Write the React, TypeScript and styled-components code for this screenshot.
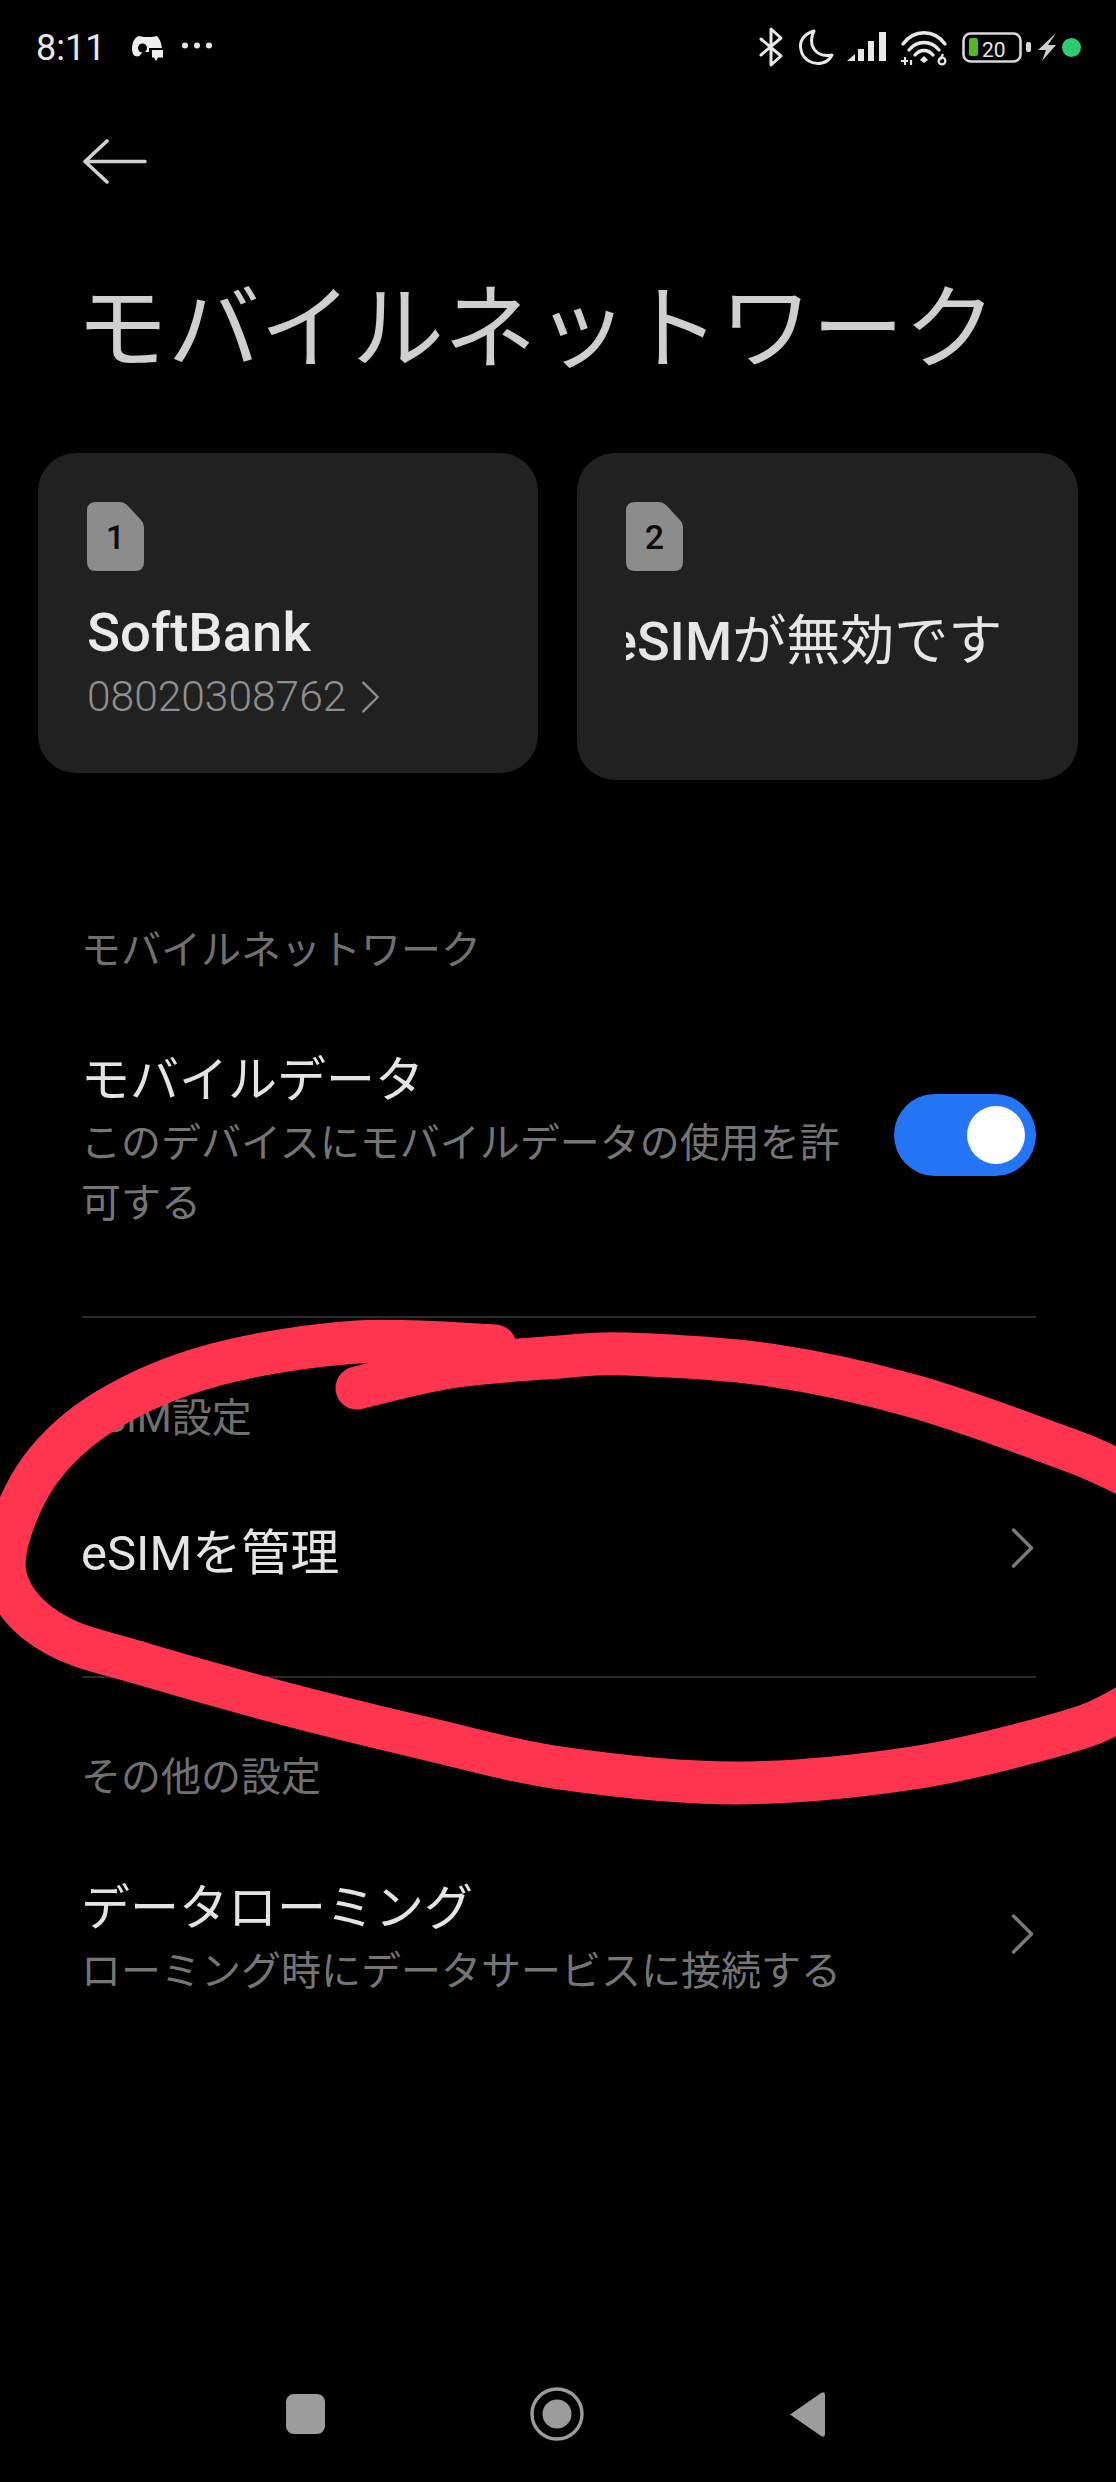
import React from 'react';
import styled, { createGlobalStyle } from 'styled-components';

const Global = createGlobalStyle`
  html, body { margin: 0; padding: 0; background: #000; }
  body { font-family: Roboto, "Noto Sans CJK JP", sans-serif; }
  #root { width: 1116px; height: 2482px; overflow: hidden; }
`;

const Page = styled.div`
  position: relative;
  width: 1116px;
  height: 2482px;
  background: #000;
  overflow: hidden;
  display: flex;
  flex-direction: column;
`;

const StatusBar = styled.div`
  height: 96px;
  padding: 0 32px 0 36px;
  box-sizing: border-box;
  display: flex;
  align-items: center;
  justify-content: space-between;
  color: #e8e8e8;
`;

const StatusLeft = styled.div`
  display: flex;
  align-items: center;
  gap: 25px;
`;

const Time = styled.span`
  font-family: Roboto, sans-serif;
  font-size: 36px;
  line-height: 40px;
`;

const StatusRight = styled.div`
  display: flex;
  align-items: center;
`;

const BackRow = styled.div`
  height: 130px;
  padding-left: 83px;
  display: flex;
  align-items: center;
`;

const Title = styled.h1`
  margin: 0;
  padding: 0 0 12px 76px;
  height: 202px;
  box-sizing: border-box;
  display: flex;
  align-items: center;
  font-family: "Noto Sans CJK JP", sans-serif;
  font-weight: 400;
  font-size: 92px;
  line-height: 92px;
  color: #cfcfcf;
  white-space: nowrap;
`;

const Cards = styled.div`
  padding: 0 38px;
  display: grid;
  grid-template-columns: 500px 501px;
  gap: 39px;
  align-items: start;
  margin-top: 25px;
`;

const Card = styled.div<{ $h: number }>`
  height: ${p => p.$h}px;
  border-radius: 38px;
  background: #212121;
  padding: 49px 0 0 49px;
  box-sizing: border-box;
  overflow: hidden;
`;

const SimBadge = styled.div`
  position: relative;
  width: 57px;
  height: 69px;
  display: flex;
  align-items: center;
  justify-content: center;
  font-family: Roboto, sans-serif;
  font-weight: 500;
  font-size: 34px;
  color: #0c0c0c;
  & > svg { position: absolute; inset: 0; }
  & > span { position: relative; }
`;

const CardName = styled.div`
  margin-top: 31px;
  font-family: Roboto, sans-serif;
  font-weight: 500;
  font-size: 54.5px;
  line-height: 60px;
  color: #eaeaea;
`;

const CardNumber = styled.div`
  display: flex;
  align-items: center;
  gap: 15px;
  margin-top: 10px;
  font-family: Roboto, sans-serif;
  font-weight: 300;
  font-size: 42.5px;
  line-height: 50px;
  color: #8f8f8f;
`;

const CardClip = styled.div`
  margin-top: 36px;
  width: 400px;
  overflow: hidden;
  white-space: nowrap;
  font-family: "Noto Sans CJK JP", sans-serif;
  font-size: 54px;
  line-height: 60px;
  color: #e6e6e6;
`;

const ClipInner = styled.div`
  margin-left: -18px;
`;

const Latin = styled.span`
  font-family: Roboto, sans-serif;
  font-weight: 500;
`;

const Section = styled.div`
  padding: 0 80px 0 82px;
  box-sizing: border-box;
  width: 100%;
`;

const SectionLabel = styled.div<{ $top: number }>`
  padding-top: ${p => p.$top}px;
  margin-left: -1px;
  font-family: Roboto, "Noto Sans CJK JP", sans-serif;
  font-size: 40px;
  line-height: 50px;
  color: #707070;
  white-space: nowrap;
`;

const Row = styled.div<{ $h: number; $pb: number }>`
  height: ${p => p.$h}px;
  padding-bottom: ${p => p.$pb}px;
  box-sizing: border-box;
  display: flex;
  align-items: center;
  justify-content: space-between;
`;

const RowText = styled.div`
  width: 770px;
  margin-left: -1px;
`;

const RowTitle = styled.div`
  font-family: Roboto, "Noto Sans CJK JP", sans-serif;
  font-size: 49px;
  line-height: 62px;
  color: #e4e4e4;
  white-space: nowrap;
`;

const RowSub = styled.div`
  margin-top: -2px;
  font-family: "Noto Sans CJK JP", sans-serif;
  font-size: 40px;
  line-height: 60px;
  color: #757575;
`;

const Toggle = styled.div`
  width: 142px;
  height: 82px;
  margin-bottom: 9px;
  border-radius: 41px;
  background: #2476f6;
  display: flex;
  align-items: center;
  justify-content: flex-end;
  padding-right: 11px;
  box-sizing: border-box;
  flex: none;
`;

const Knob = styled.div`
  width: 58px;
  height: 58px;
  border-radius: 50%;
  background: #fff;
`;

const Divider = styled.div`
  height: 2px;
  background: #2a2a2a;
`;

const ChevronSlot = styled.div<{ $lift: number }>`
  margin: 0 2px ${p => p.$lift}px 0;
  display: flex;
`;

const Spacer = styled.div`
  flex: 1;
`;

const NavBar = styled.div`
  height: 136px;
  padding-right: 5px;
  display: flex;
  align-items: center;
  justify-content: center;
  gap: 205px;
`;

const Scribble = styled.svg`
  position: absolute;
  inset: 0;
  pointer-events: none;
`;

const smooth = (pts: number[][]) => {
  let d = `M ${pts[0][0]} ${pts[0][1]}`;
  for (let i = 0; i < pts.length - 1; i++) {
    const p0 = pts[Math.max(0, i - 1)];
    const p1 = pts[i];
    const p2 = pts[i + 1];
    const p3 = pts[Math.min(pts.length - 1, i + 2)];
    d += ` C ${p1[0] + (p2[0] - p0[0]) / 6} ${p1[1] + (p2[1] - p0[1]) / 6} ${p2[0] - (p3[0] - p1[0]) / 6} ${p2[1] - (p3[1] - p1[1]) / 6} ${p2[0]} ${p2[1]}`;
  }
  return d;
};

const stroke = smooth([
  [495, 1346], [357, 1342], [214, 1365], [107, 1410], [40, 1470], [6, 1547], [14, 1597], [60, 1637],
  [143, 1664], [286, 1704], [428, 1739], [560, 1768], [735, 1783], [913, 1768], [1056, 1735], [1116, 1712], [1180, 1670],
]);
const stroke2 = smooth([
  [357, 1388], [450, 1367], [560, 1357], [627, 1354], [770, 1365], [913, 1396], [1056, 1445], [1116, 1470], [1180, 1505],
]);

const Chevron = ({ w, h, color, sw }: { w: number; h: number; color: string; sw: number }) => (
  <svg width={w} height={h} viewBox="0 0 22 40" fill="none" style={{ flex: 'none' }}>
    <path d="M2 2 L20 20 L2 38" stroke={color} strokeWidth={sw} strokeLinecap="round" strokeLinejoin="round" />
  </svg>
);

const SimIcon = () => (
  <svg width="57" height="69" viewBox="0 0 57 69">
    <path d="M9 0 H33 Q37 0 40 3 L54 18 Q57 21 57 25 V60 Q57 69 48 69 H9 Q0 69 0 60 V9 Q0 0 9 0 Z" fill="#8c8c8c" />
  </svg>
);

const StatusIcons = () => (
  <svg width="328" height="42" viewBox="756 27 328 42" fill="none">
    {/* bluetooth */}
    <path d="M761 39 L781 56 L771 65 V29 L781 38 L761 55" stroke="#e8e8e8" strokeWidth="3" strokeLinejoin="round" strokeLinecap="round" />
    {/* moon */}
    <path d="M814 31 C803 34 799 42 801 50 C803 60 813 65 822 63 C827 62 830 59 832 55 C822 57 815 53 812 45 C811 40 812 35 814 31 Z" stroke="#e8e8e8" strokeWidth="3" strokeLinejoin="round" />
    {/* signal */}
    <path d="M847 61 L855 54 V61 Z" fill="#e8e8e8" />
    <rect x="858" y="49" width="6" height="12" fill="#e8e8e8" />
    <rect x="868" y="41" width="6" height="20" fill="#e8e8e8" />
    <rect x="879" y="32" width="7" height="29" fill="#e8e8e8" />
    {/* wifi */}
    <path d="M903 44 C914 29 934 29 945 44" stroke="#e8e8e8" strokeWidth="3.4" strokeLinecap="round" />
    <path d="M909 50 C917 40 931 40 939 50" stroke="#e8e8e8" strokeWidth="3.4" strokeLinecap="round" />
    <path d="M915 55 C920 49 928 49 933 55" stroke="#e8e8e8" strokeWidth="3.4" strokeLinecap="round" />
    <path d="M920 60 L924 56 L928 60 L924 63 Z" fill="#e8e8e8" />
    <path d="M901 61 H908 M905 57 V65 M911 60 V65" stroke="#e8e8e8" strokeWidth="2.2" />
    <circle cx="942" cy="61" r="3.4" stroke="#e8e8e8" strokeWidth="2.2" />
    <path d="M943 54 L940 60" stroke="#e8e8e8" strokeWidth="2.2" />
    {/* battery */}
    <rect x="963.500" y="33.500" width="57" height="28" rx="7" stroke="#d8d8d8" strokeWidth="2.600" />
    <rect x="969" y="38" width="9" height="18" rx="2" fill="#55b81c" />
    <text x="982" y="57" fontFamily="Roboto, sans-serif" fontSize="21" fill="#e8e8e8">20</text>
    <rect x="1026" y="42" width="5" height="10" rx="2" fill="#d8d8d8" />
    {/* bolt */}
    <path d="M1056 33 L1038 50 H1046 L1042 61 L1056 45 H1048 Z" fill="#cfcfcf" />
    {/* dot */}
    <circle cx="1071.500" cy="47.500" r="9.500" fill="#2ecc71" />
  </svg>
);

const AppGlyph = () => (
  <svg width="85" height="36" viewBox="128 31 85 36" fill="none">
    <path d="M137 37 C133 38 130 43 130 50 C130 53 131 56 133 57 C136 58 138 57 139 55 L141 53 H150 L150 60 H158 L160 52 C160 45 158 40 155 37 L150 38 H142 Z" fill="#eeeeee" />
    <circle cx="140.500" cy="49" r="4.500" fill="#000" />
    <path d="M147 49 H162 V60 H156 L153.500 63.500 L151 60 H147 Z" fill="#000" />
    <path d="M150 51 H161 V58.500 H156 L154 62 L152 58.500 H150 Z" fill="#eeeeee" />
    <circle cx="183" cy="46.500" r="3" fill="#e8e8e8" />
    <circle cx="195" cy="46.500" r="3" fill="#e8e8e8" />
    <circle cx="207" cy="46.500" r="3" fill="#e8e8e8" />
  </svg>
);

export default function App() {
  return (
    <Page>
      <Global />
      <StatusBar>
        <StatusLeft>
          <Time>8:11</Time>
          <AppGlyph />
        </StatusLeft>
        <StatusRight>
          <StatusIcons />
        </StatusRight>
      </StatusBar>

      <BackRow>
        <svg width="64" height="45" viewBox="0 0 64 45" fill="none">
          <path d="M62 22.500 H2 M24 2 L2 22.500 L24 43" stroke="#d0d0d0" strokeWidth="3.600" strokeLinecap="round" strokeLinejoin="round" />
        </svg>
      </BackRow>

      <Title>モバイルネットワーク</Title>

      <Cards>
        <Card $h={320}>
          <SimBadge>
            <SimIcon />
            <span>1</span>
          </SimBadge>
          <CardName>SoftBank</CardName>
          <CardNumber>
            08020308762
            <Chevron w={19} h={32} color="#8f8f8f" sw={3} />
          </CardNumber>
        </Card>
        <Card $h={327}>
          <SimBadge>
            <SimIcon />
            <span>2</span>
          </SimBadge>
          <CardClip>
            <ClipInner><Latin>eSIM</Latin>が無効です</ClipInner>
          </CardClip>
        </Card>
      </Cards>

      <Section>
        <SectionLabel $top={146}>モバイルネットワーク</SectionLabel>
        <Row $h={340} $pb={13}>
          <RowText>
            <RowTitle>モバイルデータ</RowTitle>
            <RowSub>このデバイスにモバイルデータの使用を許可する</RowSub>
          </RowText>
          <Toggle>
            <Knob />
          </Toggle>
        </Row>
        <Divider />
        <SectionLabel $top={76}>eSIM設定</SectionLabel>
        <Row $h={232} $pb={13}>
          <RowText>
            <RowTitle>eSIMを管理</RowTitle>
          </RowText>
          <ChevronSlot $lift={12}>
            <Chevron w={23} h={40} color="#7a7a7a" sw={3.4} />
          </ChevronSlot>
        </Row>
        <Divider />
        <SectionLabel $top={75}>その他の設定</SectionLabel>
        <Row $h={272} $pb={2}>
          <RowText>
            <RowTitle>データローミング</RowTitle>
            <RowSub>ローミング時にデータサービスに接続する</RowSub>
          </RowText>
          <ChevronSlot $lift={8}>
            <Chevron w={23} h={40} color="#7a7a7a" sw={3.4} />
          </ChevronSlot>
        </Row>
      </Section>

      <Spacer />

      <NavBar>
        <svg width="39" height="40" viewBox="0 0 39 40">
          <rect x="0" y="0" width="39" height="40" rx="8" fill="#9c9c9c" />
        </svg>
        <svg width="54" height="54" viewBox="0 0 54 54" fill="none">
          <circle cx="27" cy="27" r="25" stroke="#9c9c9c" strokeWidth="3.400" />
          <circle cx="27" cy="27" r="14.500" fill="#9c9c9c" />
        </svg>
        <svg width="36" height="45" viewBox="0 0 36 45">
          <path d="M1 22.500 L32 1 Q36 -1 36 3 V42 Q36 46 32 44 Z" fill="#9c9c9c" />
        </svg>
      </NavBar>

      <Scribble width="1116" height="2482" viewBox="0 0 1116 2482" fill="none">
        <path d={stroke} stroke="#ff3550" strokeWidth="43" strokeLinecap="round" />
        <path d={stroke2} stroke="#ff3550" strokeWidth="43" strokeLinecap="round" />
      </Scribble>
    </Page>
  );
}
